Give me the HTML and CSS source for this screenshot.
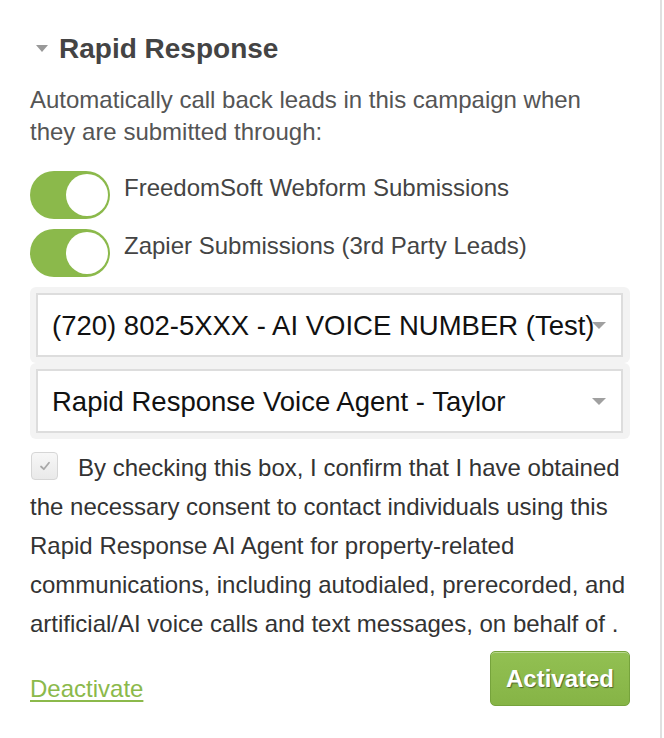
FILE: index.html
```html
<!DOCTYPE html>
<html lang="en">
<head>
<meta charset="utf-8">
<title>Rapid Response</title>
<link rel="stylesheet" href="styles.css">
</head>
<body>
<div class="panel">
  <h2 class="title"><span class="caret"></span>Rapid Response</h2>
  <p class="desc">Automatically call back leads in this campaign when they are submitted through:</p>
  <div class="toggles">
    <div class="trow">
      <span class="toggle"><span class="knob"></span></span>
      <span class="tlabel">FreedomSoft Webform Submissions</span>
    </div>
    <div class="trow">
      <span class="toggle"><span class="knob"></span></span>
      <span class="tlabel">Zapier Submissions (3rd Party Leads)</span>
    </div>
  </div>
  <div class="selects">
    <div class="sel-wrap">
      <div class="sel">(720) 802-5XXX - AI VOICE NUMBER (Test)<span class="arrow"></span></div>
    </div>
    <div class="sel-wrap">
      <div class="sel">Rapid Response Voice Agent - Taylor<span class="arrow"></span></div>
    </div>
  </div>
  <p class="consent"><span class="cbox"><svg viewBox="0 0 12 12" width="12" height="12"><path d="M2 6.5 L4.8 9.2 L10 2.8" fill="none" stroke="#a8a8a8" stroke-width="1.8" stroke-linecap="round" stroke-linejoin="round"/></svg></span>By checking this box, I confirm that I have obtained the necessary consent to contact individuals using this Rapid Response AI Agent for property-related communications, including autodialed, prerecorded, and artificial/AI voice calls and text messages, on behalf of .</p>
  <div class="footer">
    <a class="deact" href="#">Deactivate</a>
    <button class="activated" type="button">Activated</button>
  </div>
</div>
</body>
</html>
```

FILE: styles.css
```css
html, body {
  margin: 0;
  padding: 0;
  background: #ffffff;
}

body {
  font-family: "Liberation Sans", Arial, sans-serif;
}

.panel {
  box-sizing: border-box;
  width: 662px;
  min-height: 738px;
  padding: 33px 30px 0 30px;
  border-right: 2px solid #e0e0e0;
}

.title {
  margin: 0;
  font-size: 28px;
  line-height: 32px;
  font-weight: bold;
  color: #444444;
  display: flex;
  align-items: center;
}

.caret {
  width: 0;
  height: 0;
  border-left: 6px solid transparent;
  border-right: 6px solid transparent;
  border-top: 7px solid #999999;
  margin-left: 6px;
  margin-right: 11px;
  margin-top: -2px;
}

.desc {
  margin: 19px 0 0 0;
  font-size: 24px;
  line-height: 32px;
  color: #555555;
}

.toggles {
  margin-top: 23px;
  display: flex;
  flex-direction: column;
  gap: 10px;
}

.trow {
  display: flex;
  align-items: flex-start;
  gap: 14px;
}

.toggle {
  box-sizing: border-box;
  flex: none;
  width: 80px;
  height: 48px;
  border-radius: 24px;
  background: #8bb94b;
  display: flex;
  justify-content: flex-end;
  align-items: center;
  padding-right: 2px;
}

.knob {
  display: block;
  width: 42px;
  height: 42px;
  border-radius: 50%;
  background: #ffffff;
}

.tlabel {
  font-size: 24px;
  line-height: 32px;
  color: #444444;
  margin-top: 1px;
}

.selects {
  margin-top: 10px;
  display: flex;
  flex-direction: column;
}

.sel-wrap {
  background: #f3f3f3;
  border-radius: 6px;
  padding: 6px 7px 6px 6px;
}

.sel {
  position: relative;
  box-sizing: border-box;
  height: 64px;
  border: 2px solid #dddddd;
  background: #ffffff;
  padding-left: 14px;
  font-size: 27.5px;
  line-height: 61px;
  color: #111111;
  white-space: nowrap;
  overflow: hidden;
}

.arrow {
  position: absolute;
  right: 15px;
  top: 27px;
  width: 0;
  height: 0;
  border-left: 7px solid transparent;
  border-right: 7px solid transparent;
  border-top: 7px solid #a0a0a0;
}

.consent {
  margin: 9px 0 0 0;
  font-size: 24px;
  line-height: 39px;
  color: #333333;
}

.cbox {
  box-sizing: border-box;
  display: inline-flex;
  align-items: center;
  justify-content: center;
  width: 27px;
  height: 28px;
  vertical-align: top;
  margin: 4px 20px 0 1px;
  border: 1px solid #d6d6d6;
  border-radius: 4px;
  background: linear-gradient(#f7f7f7, #e9e9e9);
}

.footer {
  margin-top: 8px;
  display: flex;
  justify-content: space-between;
  align-items: flex-end;
}

.deact {
  font-size: 24px;
  line-height: 28px;
  color: #8bb94b;
  text-decoration: underline;
  text-decoration-thickness: 2px;
  text-underline-offset: 3px;
  margin-bottom: 3px;
}

.activated {
  box-sizing: border-box;
  width: 140px;
  height: 55px;
  border: 1px solid #76a33c;
  border-radius: 5px;
  background: linear-gradient(#92c052, #86b446);
  box-shadow: inset 0 1px 0 rgba(255, 255, 255, 0.35);
  font-family: "Liberation Sans", Arial, sans-serif;
  font-size: 24px;
  font-weight: bold;
  color: #ffffff;
  text-shadow: 1px 1px 1px rgba(0, 0, 0, 0.45);
  padding: 0;
}
```
